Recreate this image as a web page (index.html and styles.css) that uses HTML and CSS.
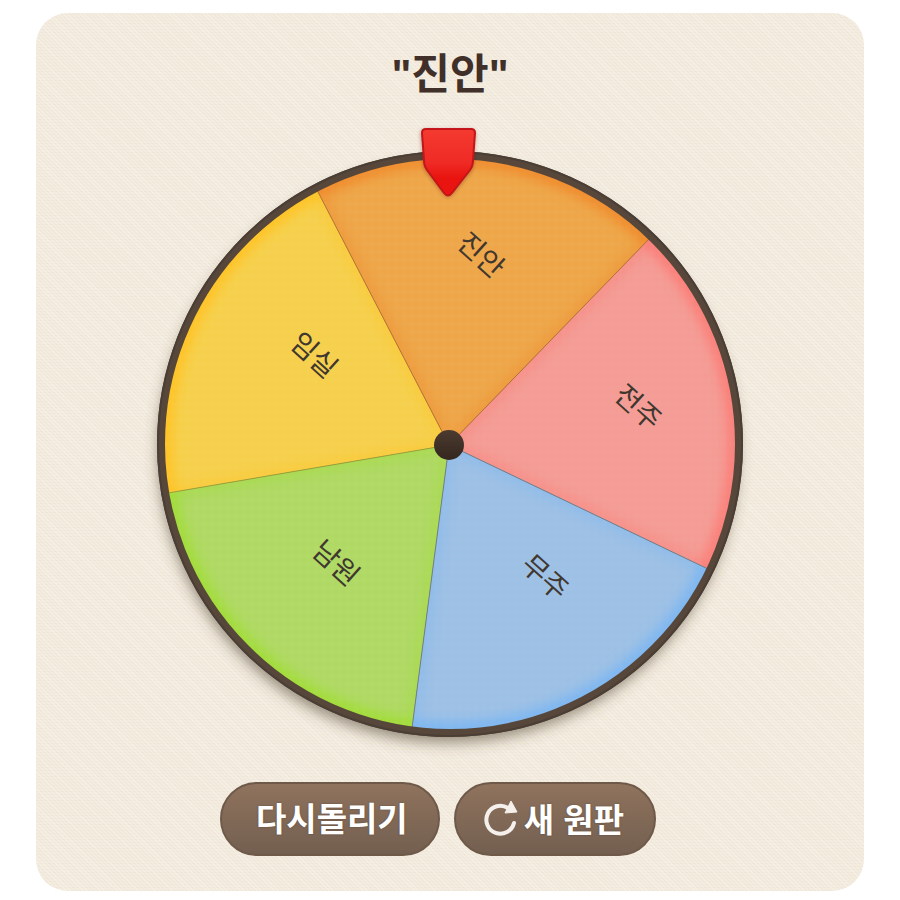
FILE: index.html
```html
<!DOCTYPE html>
<html lang="ko">
<head>
<meta charset="utf-8">
<meta name="viewport" content="width=device-width, initial-scale=1">
<title>돌림판</title>
<link rel="stylesheet" href="styles.css">
</head>
<body>
<main class="card">
  <h1 class="result">"진안"</h1>
  <svg class="wheel" viewBox="36 120 828 640" role="img" aria-label="돌림판">
    <defs>
      <clipPath id="c1"><path d="M449 445L317 190A286 286 0 0 1 650 238Z"/></clipPath>
      <clipPath id="c2"><path d="M449 445L650 238A286 286 0 0 1 708 569Z"/></clipPath>
      <clipPath id="c3"><path d="M449 445L708 569A286 286 0 0 1 412 728Z"/></clipPath>
      <clipPath id="c4"><path d="M449 445L412 728A286 286 0 0 1 168 493Z"/></clipPath>
      <clipPath id="c5"><path d="M449 445L168 493A286 286 0 0 1 317 190Z"/></clipPath>
      <pattern id="weave" width="8" height="8" patternUnits="userSpaceOnUse">
        <path class="weave-light" d="M0 4L4 0L8 4L4 8Z"/>
      </pattern>
      <linearGradient id="red" x2="0" y2="1">
        <stop offset="0" stop-color="#f43a30"/>
        <stop offset=".5" stop-color="#ef2b25"/>
        <stop offset=".75" stop-color="#e9130f"/>
        <stop offset="1" stop-color="#ea1410"/>
      </linearGradient>
      <linearGradient id="hub" x2="0" y2="1">
        <stop offset="0" stop-color="#4b3a2f"/>
        <stop offset="1" stop-color="#35271f"/>
      </linearGradient>
      <filter id="soft" x="-20%" y="-20%" width="140%" height="140%"><feGaussianBlur stdDeviation="6"/></filter>
      <filter id="shade" x="-20%" y="-20%" width="140%" height="140%"><feGaussianBlur stdDeviation="7"/></filter>
      <filter id="near" x="-20%" y="-20%" width="140%" height="140%"><feGaussianBlur stdDeviation="2"/></filter>
    </defs>

    <circle class="shadow" cx="448" cy="453" r="290" filter="url(#shade)"/>

    <circle class="base" cx="450" cy="444" r="288"/>
    <g class="slice orange" clip-path="url(#c1)"><circle class="fill" cx="450" cy="444" r="288"/><path class="edge" filter="url(#soft)" d="M317 190L449 445L650 238"/><circle class="glow" filter="url(#soft)" cx="450" cy="444" r="286"/></g>
    <g class="slice pink" clip-path="url(#c2)"><circle class="fill" cx="450" cy="444" r="288"/><path class="edge" filter="url(#soft)" d="M650 238L449 445L708 569"/><circle class="glow" filter="url(#soft)" cx="450" cy="444" r="286"/></g>
    <g class="slice blue" clip-path="url(#c3)"><circle class="fill" cx="450" cy="444" r="288"/><path class="edge" filter="url(#soft)" d="M708 569L449 445L412 728"/><circle class="glow" filter="url(#soft)" cx="450" cy="444" r="286"/></g>
    <g class="slice green" clip-path="url(#c4)"><circle class="fill" cx="450" cy="444" r="288"/><path class="edge" filter="url(#soft)" d="M412 728L449 445L168 493"/><circle class="glow" filter="url(#soft)" cx="450" cy="444" r="286"/></g>
    <g class="slice yellow" clip-path="url(#c5)"><circle class="fill" cx="450" cy="444" r="288"/><path class="edge" filter="url(#soft)" d="M168 493L449 445L317 190"/><circle class="glow" filter="url(#soft)" cx="450" cy="444" r="286"/></g>
    <circle cx="450" cy="444" r="286" fill="url(#weave)"/>

    <path class="line warm" d="M449 445L317 190M449 445L650 238"/>
    <path class="line cool" d="M449 445L708 569M449 445L412 728"/>
    <path class="line olive" d="M449 445L168 493"/>
    <circle class="rim" cx="450" cy="444" r="289"/>
    <circle class="rim-edge" cx="450" cy="444" r="292"/>

    <g class="names">
      <text transform="translate(481 255) rotate(42)" dy="10">진안</text>
      <text transform="translate(638 407) rotate(42)" dy="10">전주</text>
      <text transform="translate(545 577) rotate(42)" dy="10">무주</text>
      <text transform="translate(336 563) rotate(42)" dy="10">남원</text>
      <text transform="translate(314 355) rotate(42)" dy="10">임실</text>
    </g>

    <circle cx="449" cy="445" r="15" fill="url(#hub)"/>
    <path class="pointer-shadow" filter="url(#near)" d="M425 130H471Q475 130 475 134L473 163Q473 168 470 172L452 194Q448 199 444 194L427 172Q424 168 424 163L421 134Q421 130 425 130Z"/>
    <path class="pointer" fill="url(#red)" d="M426 129H471Q475 129 475 133L473 160Q473 166 470 170L452 193Q448 198 444 193L427 170Q424 166 424 160L422 133Q422 129 426 129Z"/>
  </svg>
  <div class="actions">
    <button class="btn" type="button">다시돌리기</button>
    <button class="btn btn-new" type="button">
      <svg class="icon" viewBox="0 0 34 38" aria-hidden="true">
        <path class="arc" d="M24 9A14 14 0 1 0 30 24"/>
        <path class="head" d="M27 2L33 13L21 14Z"/>
      </svg>새 원판</button>
  </div>
</main>
</body>
</html>
```
FILE: styles.css
```css
* {
  box-sizing: border-box;
}

body {
  margin: 0;
  padding: 13px 36px 9px;
  background: #fff;
  color: #403029;
  font-family: "Noto Sans CJK KR", "Noto Sans", sans-serif;
}

.card {
  padding: 36px 0 35px;
  border-radius: 32px;
  background:
    repeating-linear-gradient(45deg, rgba(255, 255, 255, 0.25) 0 1px, transparent 1px 3px),
    repeating-linear-gradient(0deg, rgba(205, 190, 150, 0.08) 0 1px, transparent 1px 3px),
    #f2eadd;
}

.result {
  margin: 0;
  font-family: "Liberation Sans", "Noto Sans CJK KR", sans-serif;
  font-size: 42px;
  line-height: 52px;
  font-weight: 700;
  text-align: center;
}

.wheel {
  display: block;
  width: 100%;
  margin-top: 19px;
}

.shadow {
  fill: rgba(80, 70, 50, 0.55);
}

.base {
  fill: #57473b;
}

.orange { color: #f08a2c; fill: #eea649; }
.pink { color: #fb7d76; fill: #f49c95; }
.blue { color: #7ab6f2; fill: #9dc0e5; }
.green { color: #a0dd36; fill: #afd964; }
.yellow { color: #ffc222; fill: #f6d04d; }

.edge,
.glow {
  fill: none;
  stroke: currentColor;
}

.edge {
  stroke-width: 8px;
  opacity: 0.6;
}

.glow {
  stroke-width: 16px;
}

.weave-light {
  fill: rgba(255, 255, 255, 0.02);
}

.line {
  fill: none;
  stroke-width: 1px;
}

.warm { stroke: #b37335; }
.cool { stroke: #727f88; }
.olive { stroke: #98a13a; }

.rim {
  fill: none;
  stroke: #57473b;
  stroke-width: 8px;
}

.rim-edge {
  fill: none;
  stroke: #4a3e35;
  stroke-width: 2px;
}

.names {
  fill: #40372f;
  font-size: 28px;
  font-weight: 400;
  text-anchor: middle;
}

.pointer-shadow {
  fill: rgba(90, 30, 10, 0.5);
}

.pointer {
  stroke: #c3151a;
  stroke-width: 2px;
}

.actions {
  display: flex;
  justify-content: center;
  gap: 14px;
  margin-top: 22px;
  padding-right: 24px;
}

.btn {
  display: flex;
  align-items: center;
  justify-content: center;
  height: 74px;
  padding: 0 30px 4px 34px;
  border: 2px solid #6f5a4a;
  border-radius: 37px;
  background: linear-gradient(#8f735d, #735f50);
  color: #fff;
  font-family: inherit;
  font-size: 33px;
  line-height: 48px;
  font-weight: 700;
  text-shadow: 0 0 2px rgba(50, 30, 20, 0.4);
  cursor: pointer;
}

.btn-new {
  gap: 6px;
  padding: 0 30px 2px 28px;
}

.icon {
  width: 34px;
  height: 38px;
}

.arc {
  fill: none;
  stroke: #f5f0ec;
  stroke-width: 4px;
  stroke-linecap: round;
}

.head {
  fill: #f5f0ec;
  stroke: #f5f0ec;
  stroke-width: 1px;
  stroke-linejoin: round;
}
```
